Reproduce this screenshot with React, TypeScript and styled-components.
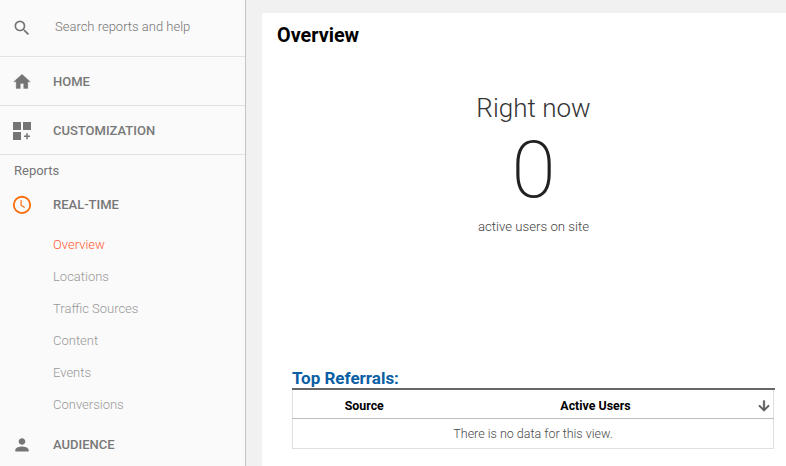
import React from "react";
import styled, { createGlobalStyle } from "styled-components";

const Global = createGlobalStyle`
  html, body { margin: 0; padding: 0; height: 466px; overflow: hidden; background: #f1f1f1; }
  body { font-family: Roboto, "Liberation Sans", sans-serif; }
  #root { height: 466px; }
`;

const Page = styled.div`
  display: flex;
  width: 786px;
  height: 466px;
  overflow: hidden;
  background: #f1f1f1;
`;

const Sidebar = styled.nav`
  flex: 0 0 245px;
  height: 466px;
  overflow: hidden;
  background: #fafafa;
  border-right: 1px solid #c4c4c4;
  display: flex;
  flex-direction: column;
`;

const SearchRow = styled.div`
  flex: 0 0 56px;
  display: flex;
  align-items: center;
  padding-left: 12px;
  border-bottom: 1px solid #e3e3e3;
`;

const SearchText = styled.span`
  margin-left: 2px;
  margin-bottom: 4px;
  font-size: 13px;
  font-weight: 300;
  color: #757575;
`;

const TopItem = styled.div`
  flex: 0 0 48px;
  display: flex;
  align-items: center;
  padding-left: 12px;
  border-bottom: 1px solid #e3e3e3;
`;

const IconSlot = styled.span`
  flex: 0 0 20px;
  width: 20px;
  height: 24px;
  display: flex;
  align-items: center;
  justify-content: center;
  margin-right: 21px;
`;

const ItemLabel = styled.span`
  font-size: 13px;
  font-weight: 500;
  color: #787878;
`;

const SectionLabel = styled.div`
  flex: 0 0 32px;
  box-sizing: border-box;
  display: flex;
  align-items: center;
  padding: 0 0 2px 14px;
  font-size: 13px;
  font-weight: 400;
  color: #757575;
`;

const GroupRow = styled.div`
  flex: 0 0 34px;
  display: flex;
  align-items: center;
  padding-left: 12px;
`;

const SubList = styled.div`
  flex: 0 0 auto;
  display: flex;
  flex-direction: column;
  padding-top: 7px;
  padding-left: 53px;
`;

const SubItem = styled.div<{ $active?: boolean }>`
  height: 32px;
  display: flex;
  align-items: center;
  font-size: 13px;
  font-weight: 300;
  color: ${(p) => (p.$active ? "#ff5c38" : "#999")};
`;

const AudienceRow = styled(GroupRow)`
  flex-basis: 48px;
`;

const Main = styled.main`
  flex: 1;
  min-width: 0;
  padding: 13px 0 0 16px;
`;

const Card = styled.section`
  width: 524px;
  height: 453px;
  background: #fff;
  border-radius: 2px 0 0 0;
  padding: 0 12px 0 15px;
  box-sizing: border-box;
  display: flex;
  flex-direction: column;
`;

const Title = styled.h1`
  margin: 0;
  flex: 0 0 45px;
  line-height: 45px;
  font-size: 19.8px;
  font-weight: 700;
  color: #000;
`;

const Now = styled.div`
  flex: 0 0 312px;
  display: flex;
  flex-direction: column;
  align-items: center;
  padding-left: 16px;
`;

const NowLabel = styled.div`
  margin-top: 33px;
  font-size: 26px;
  line-height: 34px;
  font-weight: 300;
  color: #333;
`;

const NowValue = styled.div`
  font-size: 80px;
  line-height: 90px;
  font-weight: 200;
  color: #212121;
`;

const NowCaption = styled.div`
  margin-top: 3px;
  font-size: 13.2px;
  line-height: 18px;
  font-weight: 300;
  color: #444;
`;

const Referrals = styled.div`
  margin-left: 15px;
  width: 483px;
`;

const RefTitle = styled.h2`
  margin: 0;
  height: 18px;
  font-size: 17px;
  line-height: 16px;
  font-weight: 700;
  color: #0b5fa5;
  border-bottom: 2px solid #666;
`;

const Table = styled.table`
  width: 481px;
  border-collapse: collapse;
  table-layout: fixed;
`;

const HeadCell = styled.th`
  height: 25px;
  padding: 3px 1px 0 0;
  font-size: 12.4px;
  font-weight: 700;
  color: #000;
  text-align: center;
  border-bottom: 1px solid #bdbdbd;
  &:first-child { border-left: 1px solid #e0e0e0; }
  &:last-child { border-right: 1px solid #e0e0e0; padding-right: 0; }
`;

const SortIcon = styled.svg`
  display: block;
  margin: 0 auto;
`;

const EmptyCell = styled.td`
  height: 29px;
  padding: 0;
  text-align: center;
  font-size: 12.5px;
  font-weight: 300;
  color: #4a4a4a;
  border: 1px solid #e0e0e0;
  border-top: 0;
`;

const Search = () => (
  <svg width="24" height="24" viewBox="0 0 24 24" fill="#757575">
    <path d="M15.5 14h-.79l-.28-.27A6.47 6.47 0 0 0 16 9.5 6.5 6.5 0 1 0 9.5 16c1.61 0 3.09-.59 4.23-1.57l.27.28v.79l5 4.99L20.49 19l-4.99-5zm-6 0C7.01 14 5 11.99 5 9.5S7.01 5 9.5 5 14 7.01 14 9.5 11.99 14 9.5 14z" />
  </svg>
);
const Home = () => (
  <svg width="24" height="24" viewBox="0 -1 24 24" fill="#757575" stroke="#757575" strokeWidth="0.4">
    <path d="M10 20v-6h4v6h5v-8h3L12 3 2 12h3v8z" />
  </svg>
);
const Custom = () => (
  <svg width="18" height="20" viewBox="0 -2 18 20" fill="#757575">
    <path d="M0 0h8v8H0zM10 0h8v8h-8zM0 10h8v8H0zM13.25 11.3h1.5v2.25H17v1.5h-2.25v2.25h-1.5v-2.25H11v-1.5h2.25z" />
  </svg>
);
const Clock = () => (
  <svg width="22" height="22" viewBox="0 -1 22 22" fill="none" stroke="#f96a0a">
    <circle cx="11" cy="11" r="9" strokeWidth="2" />
    <path d="M10 5.5v5.8l4 2.5" strokeWidth="1.3" />
  </svg>
);
const Person = () => (
  <svg width="24" height="24" viewBox="0 -1 24 24" fill="#757575">
    <path d="M12 12c2.21 0 4-1.79 4-4s-1.79-4-4-4-4 1.79-4 4 1.79 4 4 4zm0 2c-2.67 0-8 1.34-8 4v2h16v-2c0-2.66-5.33-4-8-4z" />
  </svg>
);
const ArrowDown = () => (
  <SortIcon width="16" height="16" viewBox="0 0 24 24" fill="#555" stroke="#555" strokeWidth="1">
    <path d="M20 12l-1.41-1.41L13 16.17V4h-2v12.17l-5.58-5.59L4 12l8 8 8-8z" />
  </SortIcon>
);

const subs = ["Overview", "Locations", "Traffic Sources", "Content", "Events", "Conversions"];

export default function App() {
  return (
    <Page>
      <Global />
      <Sidebar>
        <SearchRow>
          <IconSlot><Search /></IconSlot>
          <SearchText>Search reports and help</SearchText>
        </SearchRow>
        <TopItem>
          <IconSlot><Home /></IconSlot>
          <ItemLabel>HOME</ItemLabel>
        </TopItem>
        <TopItem>
          <IconSlot><Custom /></IconSlot>
          <ItemLabel>CUSTOMIZATION</ItemLabel>
        </TopItem>
        <SectionLabel>Reports</SectionLabel>
        <GroupRow>
          <IconSlot><Clock /></IconSlot>
          <ItemLabel>REAL-TIME</ItemLabel>
        </GroupRow>
        <SubList>
          {subs.map((s, i) => (
            <SubItem key={s} $active={i === 0}>{s}</SubItem>
          ))}
        </SubList>
        <AudienceRow>
          <IconSlot><Person /></IconSlot>
          <ItemLabel>AUDIENCE</ItemLabel>
        </AudienceRow>
      </Sidebar>
      <Main>
        <Card>
          <Title>Overview</Title>
          <Now>
            <NowLabel>Right now</NowLabel>
            <NowValue>0</NowValue>
            <NowCaption>active users on site</NowCaption>
          </Now>
          <Referrals>
            <RefTitle>Top Referrals:</RefTitle>
            <Table>
              <colgroup>
                <col style={{ width: 144 }} />
                <col style={{ width: 319 }} />
                <col style={{ width: 18 }} />
              </colgroup>
              <thead>
                <tr>
                  <HeadCell>Source</HeadCell>
                  <HeadCell>Active Users</HeadCell>
                  <HeadCell><ArrowDown /></HeadCell>
                </tr>
              </thead>
              <tbody>
                <tr>
                  <EmptyCell colSpan={3}>There is no data for this view.</EmptyCell>
                </tr>
              </tbody>
            </Table>
          </Referrals>
        </Card>
      </Main>
    </Page>
  );
}
